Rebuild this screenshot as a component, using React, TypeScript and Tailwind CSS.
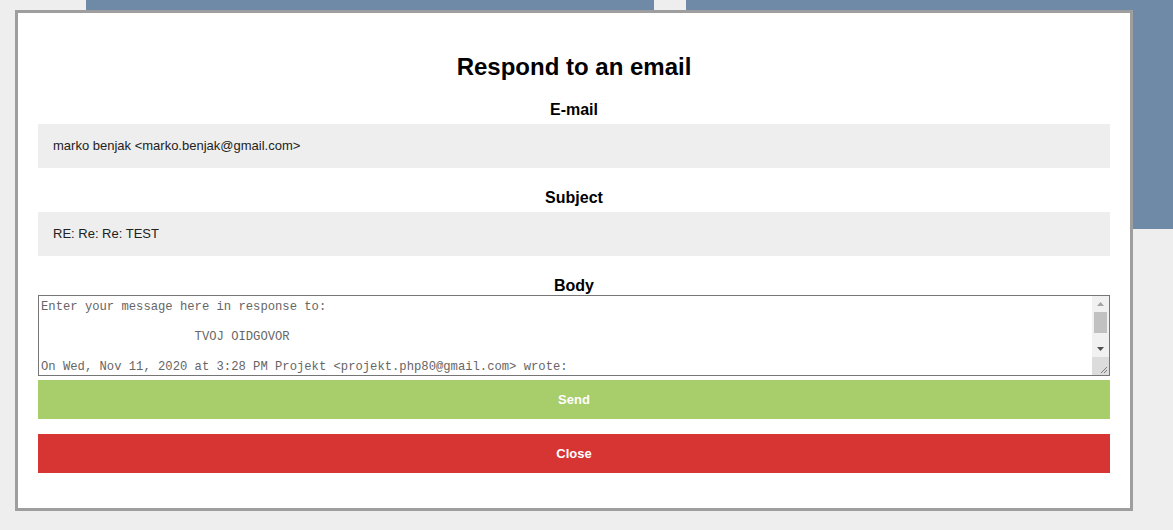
import React from "react";

const bodyText =
  "Enter your message here in response to:\n\n                     TVOJ OIDGOVOR\n\nOn Wed, Nov 11, 2020 at 3:28 PM Projekt <projekt.php80@gmail.com> wrote:\n\n> TEST\n>\n> On Wed, Nov 11, 2020 at 3:20 PM marko benjak <marko.benjak@gmail.com> wrote:\n>\n>> Re: TEST\n>>\n>> On Wed, Nov 11, 2020 at 3:10 PM Projekt <projekt.php80@gmail.com> wrote:\n>>\n>>> TEST\n";

export default function App() {
  return (
    <div
      className="relative h-[530px] w-[1173px] overflow-hidden bg-[#eeeeee]"
      style={{ fontFamily: '"Liberation Sans", Arial, sans-serif' }}
    >
      <div className="flex pl-[86px]">
        <div className="h-[229px] w-[568px] bg-[#6e8aa6]" />
        <div className="ml-[32px] h-[229px] flex-1 bg-[#6e8aa6]" />
      </div>

      <div className="absolute left-[15px] top-[10px] flex h-[501px] w-[1118px] flex-col border-[3px] border-[#9e9e9e] bg-white px-[20px] pt-[40px]">
        <h1 className="text-center text-[24px] font-bold leading-[28px] text-black">
          Respond to an email
        </h1>

        <div className="mt-[20px] text-center text-[16px] font-bold leading-[18px] text-black">
          E-mail
        </div>
        <div className="mt-[5px] flex h-[44px] items-center bg-[#eeeeee] px-[15px] text-[13px] text-[#222]">
          marko benjak &lt;marko.benjak@gmail.com&gt;
        </div>

        <div className="mt-[21px] text-center text-[16px] font-bold leading-[18px] text-black">
          Subject
        </div>
        <div className="mt-[5px] flex h-[44px] items-center bg-[#eeeeee] px-[15px] text-[13px] text-[#222]">
          RE: Re: Re: TEST
        </div>

        <div className="mt-[21px] text-center text-[16px] font-bold leading-[18px] text-black">
          Body
        </div>
        <div className="relative h-[81px] w-full">
          <textarea
            readOnly
            defaultValue={bodyText}
            className="block h-[81px] w-full resize-none overflow-hidden border border-[#767676] pb-[2px] pl-[2px] pr-[20px] pt-[4px] text-[12.2px] leading-[15px] text-[#666] outline-none [scrollbar-width:none]"
            style={{ fontFamily: '"Liberation Mono", "DejaVu Sans Mono", monospace' }}
          />
          <div className="pointer-events-none absolute bottom-[1px] right-[1px] top-[1px] flex w-[17px] flex-col bg-[#f1f1f1]">
            <div className="flex h-[16px] items-center justify-center">
              <svg width="7" height="4" viewBox="0 0 7 4">
                <path d="M3.5 0 L7 4 L0 4 Z" fill="#a3a3a3" />
              </svg>
            </div>
            <div className="mx-[2px] h-[21px] bg-[#c1c1c1]" />
            <div className="flex-1" />
            <div className="flex h-[16px] items-center justify-center">
              <svg width="7" height="4" viewBox="0 0 7 4">
                <path d="M0 0 L7 0 L3.5 4 Z" fill="#505050" />
              </svg>
            </div>
            <div className="h-[18px] bg-[#dcdcdc]">
              <svg width="17" height="18" viewBox="0 0 17 18">
                <path d="M15 10 L9 16 M15 13 L12 16" stroke="#7a7a7a" strokeWidth="1" />
              </svg>
            </div>
          </div>
        </div>

        <button className="mt-[4px] h-[39px] w-full bg-[#a8cd6b] text-[13px] font-bold text-white">
          Send
        </button>
        <button className="mt-[15px] h-[39px] w-full bg-[#d73533] text-[13px] font-bold text-white">
          Close
        </button>
      </div>
    </div>
  );
}
